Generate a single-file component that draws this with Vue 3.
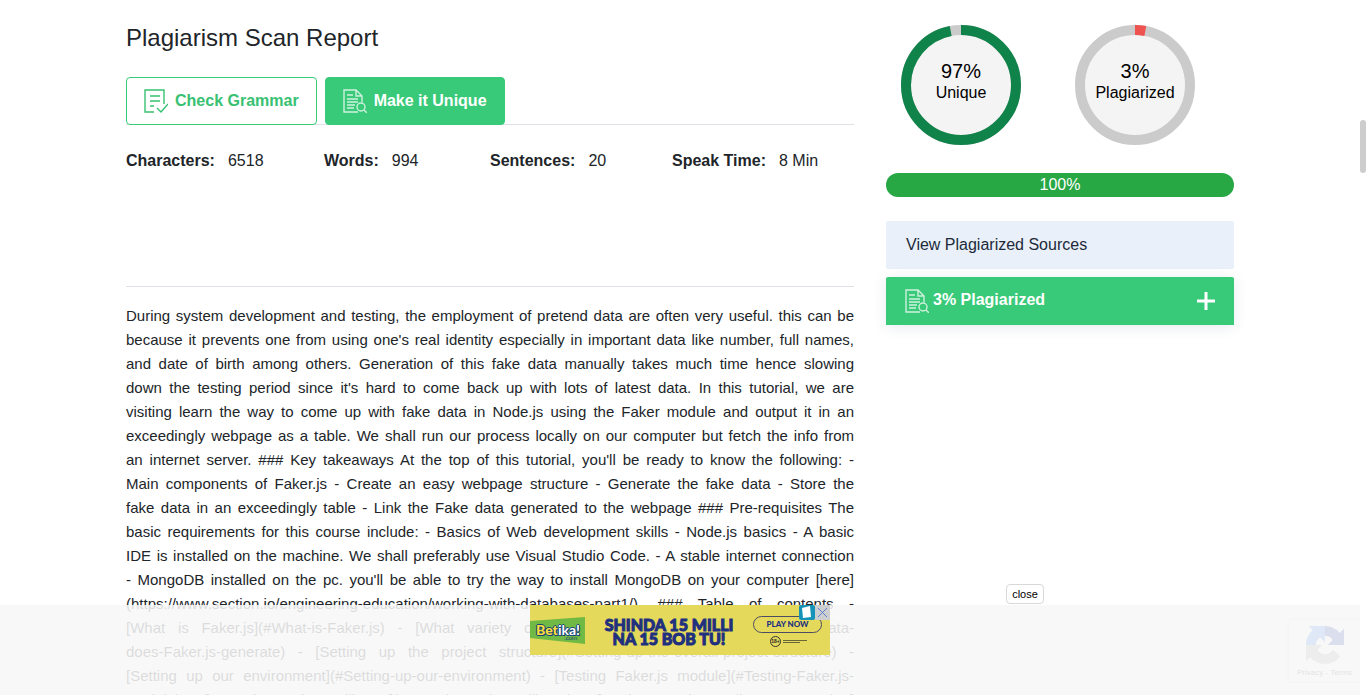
<script setup>
const stats = [
  { label: 'Characters:', value: '6518' },
  { label: 'Words:', value: '994' },
  { label: 'Sentences:', value: '20' },
  { label: 'Speak Time:', value: '8 Min' }
]

const lines = [
  'During system development and testing, the employment of pretend data are often very useful. this can be',
  "because it prevents one from using one's real identity especially in important data like number, full names,",
  'and date of birth among others. Generation of this fake data manually takes much time hence slowing',
  "down the testing period since it's hard to come back up with lots of latest data. In this tutorial, we are",
  'visiting learn the way to come up with fake data in Node.js using the Faker module and output it in an',
  'exceedingly webpage as a table. We shall run our process locally on our computer but fetch the info from',
  "an internet server. ### Key takeaways At the top of this tutorial, you'll be ready to know the following: -",
  'Main components of Faker.js - Create an easy webpage structure - Generate the fake data - Store the',
  'fake data in an exceedingly table - Link the Fake data generated to the webpage ### Pre-requisites The',
  'basic requirements for this course include: - Basics of Web development skills - Node.js basics - A basic',
  'IDE is installed on the machine. We shall preferably use Visual Studio Code. - A stable internet connection',
  "- MongoDB installed on the pc. you'll be able to try the way to install MongoDB on your computer [here]",
  '(https://www.section.io/engineering-education/working-with-databases-part1/). ### Table of contents -',
  '[What is Faker.js](#What-is-Faker.js) - [What variety of data does generate](#What-variety-of-data-',
  'does-Faker.js-generate) - [Setting up the project structure](#Setting-up-the-overall-project-structure) -',
  '[Setting up our environment](#Setting-up-our-environment) - [Testing Faker.js module](#Testing-Faker.js-',
  'module) - [How the project will use](#How-the-project-will-use) - [Setting up the coding construction]'
]

const gauges = [
  { percent: 97, label: 'Unique', kind: 'unique' },
  { percent: 3, label: 'Plagiarized', kind: 'copied' }
]
</script>

<template>
  <div class="page">
    <div class="container">
      <main class="report">
        <h1>Plagiarism Scan Report</h1>
        <div class="actions">
          <button type="button" class="btn outline">
            <svg class="icon" viewBox="0 0 24 24" aria-hidden="true">
              <path d="M10 23H1V1H20V15M6 7H16M6 12H16M6 17H10M13 19L17 23L24 15" />
            </svg>
            Check Grammar
          </button>
          <button type="button" class="btn solid">
            <svg class="icon" viewBox="0 0 24 24" aria-hidden="true">
              <path d="M15 23H1V1H13L19 7V13M13 1V7H19M4 6H10M4 10H15M4 13H15M4 16H12M4 19H11" />
              <circle cx="18" cy="18" r="4" />
              <path d="M21 21L24 24" />
            </svg>
            Make it Unique
          </button>
        </div>
        <dl class="stats">
          <div v-for="s in stats" :key="s.label" class="stat">
            <dt>{{ s.label }}</dt>
            <dd>{{ s.value }}</dd>
          </div>
        </dl>
        <p class="body-text">
          <span v-for="(line, i) in lines" :key="i" class="line">{{ line }}</span>
        </p>
      </main>

      <aside class="results">
        <div class="gauges">
          <div v-for="g in gauges" :key="g.kind" class="gauge" :class="g.kind">
            <svg class="ring" viewBox="0 0 120 120" aria-hidden="true">
              <circle class="track" cx="60" cy="60" r="55" />
              <circle
                class="arc"
                cx="60"
                cy="60"
                r="55"
                pathLength="100"
                :stroke-dasharray="`${g.percent} 100`"
                transform="rotate(-90 60 60)"
              />
            </svg>
            <div class="gauge-text">
              <strong>{{ g.percent }}%</strong>
              <span>{{ g.label }}</span>
            </div>
          </div>
        </div>
        <div class="progress">100%</div>
        <a href="#sources" class="sources">View Plagiarized Sources</a>
        <button type="button" class="accordion">
          <svg class="icon" viewBox="0 0 24 24" aria-hidden="true">
            <path d="M15 23H1V1H13L19 7V13M13 1V7H19M4 6H10M4 10H15M4 13H15M4 16H12M4 19H11" />
            <circle cx="18" cy="18" r="4" />
            <path d="M21 21L24 24" />
          </svg>
          <span class="accordion-label">3% Plagiarized</span>
          <svg class="plus" viewBox="0 0 18 18" aria-hidden="true">
            <path d="M9 0V18M0 9H18" />
          </svg>
        </button>
      </aside>
    </div>

    <div class="captcha">
      <svg class="captcha-logo" viewBox="0 0 64 64" aria-hidden="true">
        <path class="c-navy" d="M64 31.955l-.033-1.37V4.687l-7.16 7.16C50.948 4.674 42.033.093 32.05.093c-10.4 0-19.622 4.96-25.458 12.64l11.736 11.86a15.55 15.55 0 0 1 4.754-5.334c2.05-1.6 4.952-2.906 8.968-2.906.485 0 .86.057 1.135.163 4.976.393 9.288 3.14 11.828 7.124l-8.307 8.307z" />
        <path class="c-blue" d="M31.862.094l-1.37.033H4.594l7.16 7.16C4.58 13.147 0 22.06 0 32.046c0 10.4 4.96 19.622 12.64 25.458L24.5 45.768a15.55 15.55 0 0 1-5.334-4.754c-1.6-2.05-2.906-4.952-2.906-8.968 0-.485.057-.86.163-1.135.393-4.976 3.14-9.288 7.124-11.828l8.307 8.307z" />
        <path class="c-grey" d="M.001 32.045l.033 1.37v25.898l7.16-7.16c5.86 7.173 14.774 11.754 24.76 11.754 10.4 0 19.622-4.96 25.458-12.64l-11.736-11.86a15.55 15.55 0 0 1-4.754 5.334c-2.05 1.6-4.952 2.906-8.968 2.906-.485 0-.86-.057-1.135-.163-4.976-.393-9.288-3.14-11.828-7.124l8.307-8.307z" />
      </svg>
      <span>Privacy - Terms</span>
    </div>

    <div class="ad-bar">
      <button type="button" class="close">close</button>
      <div class="ad">
        <div class="brand">
          <svg class="brand-bg" viewBox="0 0 55 50" preserveAspectRatio="none" aria-hidden="true">
            <path d="M0 16L55 12V39L0 33Z" />
          </svg>
          <span class="brand-name"><b>Bet</b>ika!</span>
          <span class="brand-com">.com</span>
        </div>
        <div class="slogan">
          <span>SHINDA 15 MILLI</span>
          <span>NA 15 BOB TU!</span>
        </div>
        <div class="cta">
          <a href="#play" class="play">PLAY NOW</a>
          <div class="legal">
            <span class="age">18+</span>
            <span class="fine"><i></i><i></i></span>
          </div>
        </div>
        <div class="ad-badges">
          <svg class="ad-info" viewBox="0 0 16 15" aria-hidden="true">
            <rect width="16" height="15" rx="2" />
            <path d="M3 3L11 1L12 12L4 13Z" />
          </svg>
          <button type="button" class="ad-close" aria-label="Close ad">
            <svg viewBox="0 0 15 15" aria-hidden="true"><path d="M3 3L12 12M12 3L3 12" /></svg>
          </button>
        </div>
      </div>
    </div>
    <div class="scroll-thumb"></div>
  </div>
</template>

<style>
body {
  margin: 0;
  background: #fff;
}
</style>

<style scoped>
* {
  box-sizing: border-box;
}
.page {
  position: relative;
  height: 100vh;
  overflow: hidden;
  padding: 0 6px 0 0;
  background: #fff;
  color: #212529;
  font: 16px/24px "Liberation Sans", Arial, sans-serif;
}
button {
  font: inherit;
  cursor: pointer;
}
.container {
  display: flex;
  gap: 32px;
  max-width: 1140px;
  margin: 0 auto;
  padding: 0 16px;
}
.report {
  flex: 1;
  min-width: 0;
  padding-top: 24px;
}
h1 {
  margin: 0 0 25px;
  font-size: 24px;
  line-height: 28px;
  font-weight: 400;
}
.actions {
  display: flex;
  gap: 8px;
  box-shadow: inset 0 -1px #dee2e6;
}
.btn {
  display: flex;
  align-items: center;
  gap: 7px;
  height: 48px;
  padding: 0 17px;
  border: 1px solid #38ca78;
  border-radius: 4px;
  font-weight: 700;
  white-space: nowrap;
}
.outline {
  background: #fff;
  color: #38c172;
}
.solid {
  background: #38ca78;
  color: #fff;
}
.icon {
  width: 24px;
  height: 24px;
  flex: none;
  fill: none;
  stroke: currentColor;
  stroke-width: 1.4;
}
.solid .icon,
.accordion .icon {
  opacity: 0.75;
}
.stats {
  display: grid;
  grid-template-columns: 198fr 166fr 182fr 182fr;
  height: 162px;
  margin: 0 0 17px;
  padding: 24px 0 0;
  border-bottom: 1px solid #dee2e6;
}
.stat {
  display: flex;
  gap: 13px;
}
dt {
  font-weight: 700;
}
dd {
  margin: 0;
}
.body-text {
  margin: 0;
  font-size: 15px;
}
.line {
  display: block;
  white-space: nowrap;
  text-align: justify;
  text-align-last: justify;
}
.results {
  width: 348px;
  padding-top: 25px;
}
.gauges {
  display: flex;
  gap: 54px;
  padding-left: 15px;
}
.gauge {
  position: relative;
  width: 120px;
  height: 120px;
}
.ring {
  display: block;
  width: 120px;
  height: 120px;
  fill: none;
  stroke-width: 10;
}
.track {
  fill: #f4f4f4;
  stroke: #cbcbcb;
}
.unique .arc {
  stroke: #10834a;
}
.copied .arc {
  stroke: #ef5350;
}
.gauge-text {
  position: absolute;
  inset: 34px 0 auto;
  display: flex;
  flex-direction: column;
  color: #000;
  text-align: center;
}
.gauge-text strong {
  font-size: 20px;
  font-weight: 400;
}
.gauge-text span {
  line-height: 20px;
}
.progress {
  height: 24px;
  margin: 28px 0 24px;
  border-radius: 12px;
  background: #28a745;
  color: #fff;
  text-align: center;
}
.sources {
  display: block;
  margin-bottom: 8px;
  padding: 12px 20px;
  background: #e9f0f9;
  border-radius: 2px;
  color: #212a3a;
  text-decoration: none;
}
.accordion {
  display: flex;
  align-items: center;
  gap: 4px;
  width: 100%;
  height: 48px;
  padding: 0 19px;
  border: 0;
  border-radius: 2px 2px 0 0;
  background: #38ca78;
  box-shadow: 0 2px 14px rgba(60, 80, 120, 0.12);
  color: #fff;
  font-weight: 700;
  text-align: left;
}
.accordion-label {
  flex: 1;
  padding-bottom: 2px;
}
.plus {
  width: 18px;
  height: 18px;
  stroke: #fff;
  stroke-width: 3;
}
.ad-bar {
  position: absolute;
  inset: auto 6px 0 0;
  display: flex;
  justify-content: center;
  height: 90px;
  background: rgba(247, 247, 247, 0.87);
}
.close {
  position: absolute;
  top: -21px;
  right: 316px;
  height: 20px;
  width: 38px;
  padding: 0;
  border: 1px solid #d8d8d8;
  border-radius: 4px;
  background: #fff;
  color: #000;
  font-size: 11px;
  line-height: 18px;
}
.ad {
  position: relative;
  display: flex;
  width: 300px;
  height: 50px;
  background: #e5d95c;
}
.brand {
  position: relative;
  width: 55px;
}
.brand-bg {
  width: 55px;
  height: 50px;
  fill: #70b944;
}
.brand-name {
  position: absolute;
  top: 16px;
  left: 6px;
  color: #fff;
  font: 700 14px/18px Lato, sans-serif;
  text-shadow: 1px 0 #174478, -1px 0 #174478, 0 1px #174478, 0 -1px #174478, 1px 1px #174478;
}
.brand-name b {
  color: #ffdf3a;
}
.brand-com {
  position: absolute;
  top: 30px;
  right: 8px;
  color: #174478;
  font-size: 6px;
  line-height: 6px;
}
.slogan {
  display: flex;
  flex-direction: column;
  flex: 1;
  padding-top: 13px;
  color: #20307e;
  font: 900 16px/14px Lato, sans-serif;
  text-align: center;
  white-space: nowrap;
  -webkit-text-stroke: 1px #20307e;
}
.cta {
  width: 77px;
  padding: 11px 8px 0 0;
}
.play {
  display: block;
  height: 17px;
  border: 1px solid #4b4c63;
  border-radius: 9px;
  color: #20307e;
  font: 900 8px/15px Lato, sans-serif;
  text-align: center;
  text-decoration: none;
}
.legal {
  display: flex;
  align-items: center;
  gap: 2px;
  padding: 3px 0 0 17px;
}
.age {
  width: 11px;
  height: 11px;
  border: 1px solid #333;
  border-radius: 50%;
  color: #222;
  font-size: 5px;
  font-weight: 700;
  line-height: 9px;
  text-align: center;
}
.fine i {
  display: block;
  width: 24px;
  height: 1px;
  margin: 1px 0;
  background: #6a6638;
}
.fine i + i {
  width: 17px;
}
.ad-badges {
  position: absolute;
  top: 0;
  right: 0;
  display: flex;
}
.ad-info {
  width: 16px;
  height: 15px;
  fill: #1593b8;
}
.ad-info path {
  fill: #fff;
}
.ad-close {
  width: 15px;
  height: 15px;
  padding: 0;
  border: 0;
  background: #ccced0;
}
.ad-close svg {
  display: block;
  stroke: #5c7fd0;
}
.captcha {
  position: absolute;
  right: 6px;
  bottom: 14px;
  display: flex;
  flex-direction: column;
  align-items: center;
  width: 71px;
  height: 61px;
  padding-top: 6px;
  background: #f9f9f9;
  box-shadow: 0 0 4px #bbb;
  color: #555;
  clip-path: inset(-5px 0 -5px -5px);
  font-size: 8px;
  line-height: 12px;
}
.captcha-logo {
  width: 38px;
  height: 38px;
  margin-bottom: 3px;
}
.c-blue {
  fill: #4285f4;
}
.c-navy {
  fill: #1c3aa9;
}
.c-grey {
  fill: #ababab;
}
.scroll-thumb {
  position: absolute;
  top: 120px;
  right: 0;
  width: 6px;
  height: 53px;
  border-radius: 3px;
  background: #cdcdcd;
}
</style>
